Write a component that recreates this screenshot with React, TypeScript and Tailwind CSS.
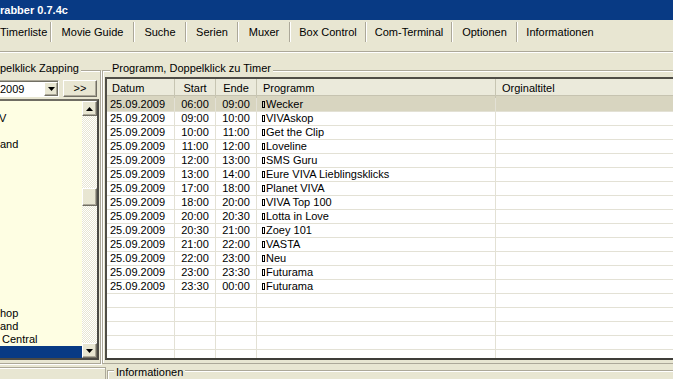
import React from "react";

const tabs = [
  { label: "Timerliste", w: "w-[50px] justify-start pl-0" },
  { label: "Movie Guide", w: "w-[81px] justify-center" },
  { label: "Suche", w: "w-[50px] justify-center" },
  { label: "Serien", w: "w-[50px] justify-center" },
  { label: "Muxer", w: "w-[50px] justify-center" },
  { label: "Box Control", w: "w-[74px] justify-center" },
  { label: "Com-Terminal", w: "w-[84px] justify-center" },
  { label: "Optionen", w: "w-[63px] justify-center" },
  { label: "Informationen", w: "w-[84px] justify-center" },
];

const rows: [string, string, string][] = [
  ["06:00", "09:00", "Wecker"],
  ["09:00", "10:00", "VIVAskop"],
  ["10:00", "11:00", "Get the Clip"],
  ["11:00", "12:00", "Loveline"],
  ["12:00", "13:00", "SMS Guru"],
  ["13:00", "14:00", "Eure VIVA Lieblingsklicks"],
  ["17:00", "18:00", "Planet VIVA"],
  ["18:00", "20:00", "VIVA Top 100"],
  ["20:00", "20:30", "Lotta in Love"],
  ["20:30", "21:00", "Zoey 101"],
  ["21:00", "22:00", "VASTA"],
  ["22:00", "23:00", "Neu"],
  ["23:00", "23:30", "Futurama"],
  ["23:30", "00:00", "Futurama"],
];

const channels: { t: string; cls: string }[] = [
  { t: "V", cls: "pl-0" },
  { t: "", cls: "" },
  { t: "and", cls: "pl-[1px]" },
  ...Array.from({ length: 12 }, () => ({ t: "", cls: "" })),
  { t: "hop", cls: "pl-[1px]" },
  { t: "and", cls: "pl-[1px]" },
  { t: "Central", cls: "pl-[3px]" },
];

const raised =
  "bg-[#e8e6d2] border border-t-white border-l-white border-r-[#716f64] border-b-[#716f64] shadow-[inset_-1px_-1px_0_#aca899]";

function TriDown() {
  return (
    <svg width="7" height="4" viewBox="0 0 7 4">
      <polygon points="0,0 7,0 3.5,4" fill="#000" />
    </svg>
  );
}
function TriUp() {
  return (
    <svg width="7" height="4" viewBox="0 0 7 4">
      <polygon points="0,4 7,4 3.5,0" fill="#000" />
    </svg>
  );
}

function Box() {
  return <span className="inline-block w-[3px] h-[7px] border border-black mr-[1px]" />;
}

export default function App() {
  return (
    <div className="w-[673px] h-[379px] overflow-hidden bg-[#e8e6d2] flex flex-col text-[11px] leading-[13px] text-black font-['Liberation_Sans',Arial,sans-serif]">
      {/* Title bar */}
      <div className="h-[20px] shrink-0 bg-[#083a84] text-white font-bold flex items-center pt-[1px] whitespace-nowrap">
        rabber 0.7.4c
      </div>

      {/* Tabs */}
      <div className="h-[31px] shrink-0 flex items-start pt-[2px]">
        {tabs.map((t, i) => (
          <React.Fragment key={i}>
            {i > 0 && (
              <div className="w-[2px] h-[20px] shrink-0 border-l border-l-[#aca899] border-r border-r-white" />
            )}
            <div className={`h-[20px] shrink-0 flex items-center whitespace-nowrap ${t.w}`}>
              {t.label}
            </div>
          </React.Fragment>
        ))}
      </div>
      <div className="h-[2px] shrink-0 border-t border-t-[#aca899] border-b border-b-white" />

      {/* Main */}
      <div className="h-[312px] shrink-0 flex pt-[17px]">
        {/* Left group */}
        <div className="relative -ml-[4px] w-[105px] h-[294px] shrink-0 border border-[#aca899] shadow-[inset_1px_1px_0_#fff,1px_1px_0_#fff] pt-[9px]">
          <div className="absolute -top-[9px] left-[1px] px-[2px] bg-[#e8e6d2] whitespace-nowrap">
            pelklick Zapping
          </div>
          <div className="flex h-[17px] gap-[4px]">
            <div className="w-[62px] h-[17px] bg-white border border-t-[#aca899] border-l-[#aca899] border-r-white border-b-white shadow-[inset_1px_1px_0_#716f64] flex pt-[1px] pl-[1px]">
              <div className="flex-1 flex items-center pl-[1px]">2009</div>
              <div className={`w-[14px] h-[14px] flex items-center justify-center ${raised}`}>
                <TriDown />
              </div>
            </div>
            <div className={`w-[34px] h-[17px] flex items-center justify-center ${raised}`}>
              &gt;&gt;
            </div>
          </div>
          <div className="mt-[2px] w-[102px] h-[261px] border-2 border-t-[#6f6d63] border-l-[#6f6d63] border-r-[#4a4944] border-b-[#4a4944] flex overflow-hidden">
            <div className="flex-1 bg-[#fefee3] pt-[11px] overflow-hidden">
              {channels.map((c, i) => (
                <div key={i} className={`h-[13px] flex items-center whitespace-nowrap ${c.cls}`}>
                  {c.t}
                </div>
              ))}
              <div className="h-[13px] bg-[#083a84]" />
            </div>
            <div className="w-[15px] flex flex-col bg-[repeating-conic-gradient(#ffffff_0_25%,#e8e6d2_0_50%)] bg-[length:2px_2px]">
              <div className={`h-[15px] shrink-0 flex items-center justify-center ${raised}`}>
                <TriUp />
              </div>
              <div className="flex-1">
                <div className={`mt-[72px] h-[18px] ${raised}`} />
              </div>
              <div className={`h-[15px] shrink-0 flex items-center justify-center ${raised}`}>
                <TriDown />
              </div>
            </div>
          </div>
        </div>

        {/* Right group */}
        <div className="relative ml-[1px] w-[700px] h-[294px] shrink-0 border border-[#aca899] shadow-[inset_1px_1px_0_#fff] pt-[6px] pl-[2px]">
          <div className="absolute -top-[9px] left-[7px] px-[2px] bg-[#e8e6d2] whitespace-nowrap">
            Programm, Doppelklick zu Timer
          </div>
          <div className="w-[640px] h-[283px] border-2 border-t-[#4f4d46] border-l-[#4f4d46] border-r-[#3f3e39] border-b-[#3f3e39] bg-white flex flex-col overflow-hidden">
            {/* Header */}
            <div className="h-[19px] shrink-0 flex bg-[#ebeadb] shadow-[inset_0_-2px_0_#d8d5c0,inset_0_-3px_0_#c6c3b0]">
              <div className="w-[68px] shrink-0 pl-[5px] pt-[3px] border-r border-r-[#c7c5b2]">Datum</div>
              <div className="w-[41px] shrink-0 text-center pt-[3px] border-r border-r-[#c7c5b2]">Start</div>
              <div className="w-[41px] shrink-0 text-center pt-[3px] border-r border-r-[#c7c5b2]">Ende</div>
              <div className="w-[239px] shrink-0 pl-[6px] pt-[3px] border-r border-r-[#c7c5b2]">Programm</div>
              <div className="flex-1 pl-[6px] pt-[3px]">Orginaltitel</div>
            </div>
            {/* Rows */}
            {rows.map((r, i) => (
              <div
                key={i}
                className={`h-[14px] shrink-0 flex border-b border-b-[#e3e1d5] ${i === 0 ? "bg-[#d8d5c0]" : ""}`}
              >
                <div className="w-[68px] shrink-0 pl-[3px] flex items-center border-r border-r-[#e3e1d5]">25.09.2009</div>
                <div className="w-[41px] shrink-0 flex items-center justify-center border-r border-r-[#e3e1d5]">{r[0]}</div>
                <div className="w-[41px] shrink-0 flex items-center justify-center border-r border-r-[#e3e1d5]">{r[1]}</div>
                <div className="w-[239px] shrink-0 pl-[5px] flex items-center border-r border-r-[#e3e1d5] whitespace-nowrap">
                  <span>
                    <Box />
                    {r[2]}
                  </span>
                </div>
                <div className="flex-1" />
              </div>
            ))}
            {Array.from({ length: 5 }).map((_, i) => (
              <div key={"e" + i} className="h-[14px] shrink-0 flex border-b border-b-[#e3e1d5]">
                <div className="w-[68px] shrink-0 border-r border-r-[#e3e1d5]" />
                <div className="w-[41px] shrink-0 border-r border-r-[#e3e1d5]" />
                <div className="w-[41px] shrink-0 border-r border-r-[#e3e1d5]" />
                <div className="w-[239px] shrink-0 border-r border-r-[#e3e1d5]" />
                <div className="flex-1" />
              </div>
            ))}
          </div>
        </div>
      </div>

      {/* Bottom */}
      <div className="h-[14px] shrink-0 flex">
        <div className="-ml-[4px] mt-[2px] w-[110px] h-[20px] shrink-0 border-t border-l border-r border-[#aca899] shadow-[inset_1px_1px_0_#fff]" />
        <div className="relative ml-[1px] mt-[5px] w-[700px] h-[20px] shrink-0 border-t border-l border-[#aca899] shadow-[inset_1px_1px_0_#fff]">
          <div className="absolute -top-[5px] left-[6px] px-[2px] bg-[#e8e6d2] whitespace-nowrap">Informationen</div>
        </div>
      </div>
    </div>
  );
}
